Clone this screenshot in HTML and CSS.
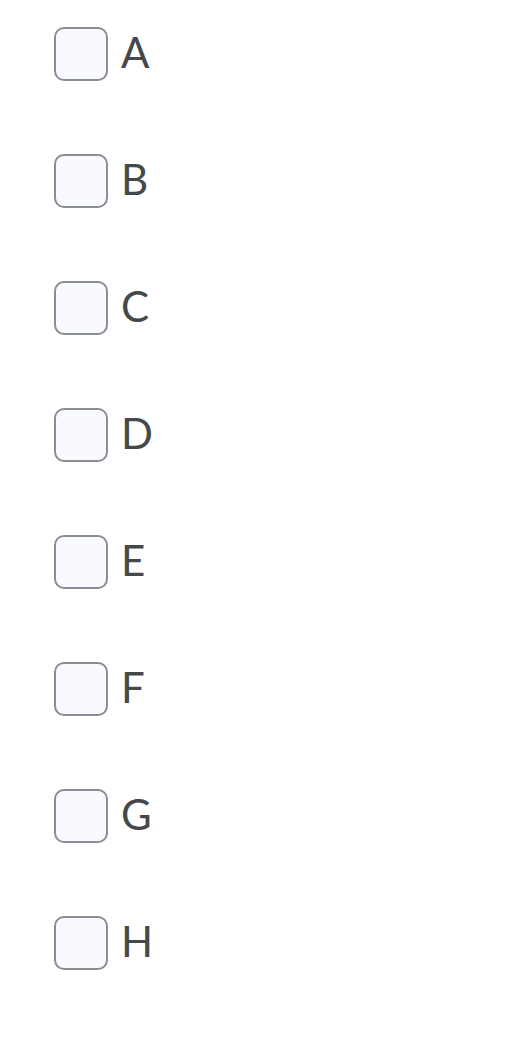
FILE: index.html
```html
<!DOCTYPE html>
<html lang="en">
<head>
    <meta charset="UTF-8">
    <meta name="viewport" content="width=device-width, initial-scale=1.0">
    <title>Options</title>
    <link rel="stylesheet" href="styles.css">
</head>
<body>
    <div class="options">
        <label class="option"><span class="box"></span><span class="text">A</span></label>
        <label class="option"><span class="box"></span><span class="text">B</span></label>
        <label class="option"><span class="box"></span><span class="text">C</span></label>
        <label class="option"><span class="box"></span><span class="text">D</span></label>
        <label class="option"><span class="box"></span><span class="text">E</span></label>
        <label class="option"><span class="box"></span><span class="text">F</span></label>
        <label class="option"><span class="box"></span><span class="text">G</span></label>
        <label class="option"><span class="box"></span><span class="text">H</span></label>
    </div>
</body>
</html>
```

FILE: styles.css
```css
body {
    font-family: Lato, 'Open Sans', sans-serif;
    background: #ffffff;
    margin: 0;
}
.options {
    display: flex;
    flex-direction: column;
    gap: 73px;
    padding: 27px 0 0 54px;
}
.option {
    display: flex;
    align-items: center;
    gap: 13px;
    height: 54px;
    cursor: pointer;
}
.box {
    width: 54px;
    height: 54px;
    box-sizing: border-box;
    border: 2px solid #8a8d91;
    border-radius: 10px;
    background: #f8faff;
}
.text {
    font-size: 42px;
    color: #45484b;
    line-height: 1;
    padding-bottom: 4px;
}
```
